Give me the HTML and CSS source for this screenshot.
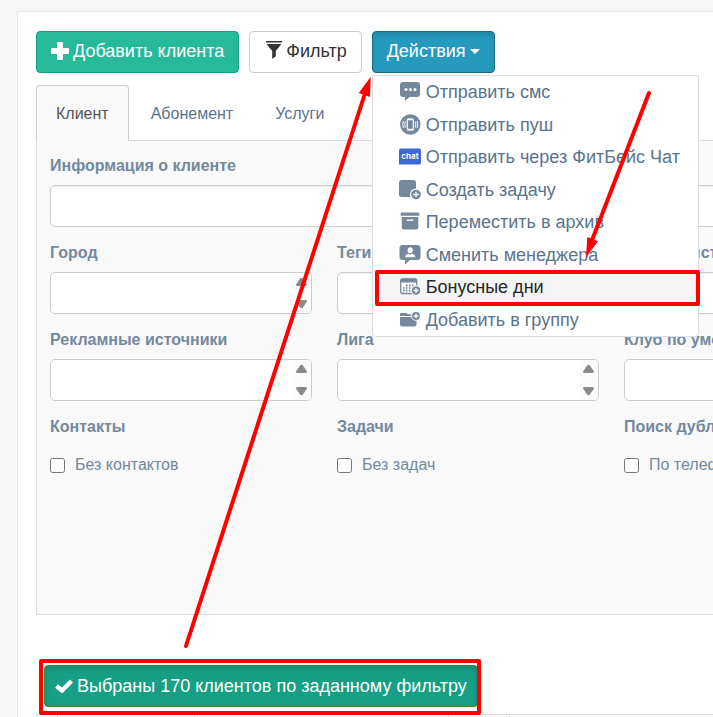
FILE: index.html
```html
<!DOCTYPE html>
<html lang="ru">
<head>
<meta charset="utf-8">
<title>Клиенты</title>
<link rel="stylesheet" href="styles.css">
</head>
<body>
<main class="panel">
  <div class="toolbar">
    <button type="button" class="btn btn-add">
      <svg class="icon-plus" viewBox="0 0 18 18" aria-hidden="true"><path d="M7 0h4q1 0 1 1v5h5q1 0 1 1v4q0 1-1 1h-5v5q0 1-1 1H7q-1 0-1-1v-5H1q-1 0-1-1V7q0-1 1-1h5V1q0-1 1-1z"/></svg>Добавить клиента
    </button>
    <button type="button" class="btn btn-filter">
      <svg class="icon-filter" viewBox="0 0 16 18" aria-hidden="true"><path d="M0 0h16v1.600H0zM.6 3h14.800L9.800 10v5.200L6.200 18v-8z"/></svg>Фильтр
    </button>
    <div class="dropdown">
      <button type="button" class="btn btn-actions" aria-expanded="true">Действия<span class="caret"></span></button>
      <ul class="menu">
        <li><a href="#sms"><svg viewBox="0 0 24 22"><path d="M4 1h14q3 0 3 3v9q0 3-3 3h-7.500l-4.500 4v-4H4q-3 0-3-3V4q0-3 3-3z"/><g fill="#fff"><circle cx="7" cy="8.500" r="1.500"/><circle cx="11.500" cy="8.500" r="1.500"/><circle cx="16" cy="8.500" r="1.500"/></g></svg>Отправить смс</a></li>
        <li><a href="#push"><svg viewBox="0 0 24 22"><circle cx="11.300" cy="10.500" r="10.200"/><g fill="none" stroke="#fff"><rect x="8.300" y="5" width="6" height="11" rx="1" stroke-width="1.200"/><path d="M8.500 5.500h5.600M8.500 15.500h5.600" stroke-width="1.600"/><path d="M6.300 7.500q-1.200 3 0 6M16.300 7.500q1.200 3 0 6M4.500 7q-1.600 3.500 0 7M18.100 7q1.600 3.500 0 7"/></g></svg>Отправить пуш</a></li>
        <li><a href="#chat"><svg viewBox="0 0 24 22"><path fill="#3e67d6" d="M2 2.500h18q2 0 2 2v12q0 2-2 2H0v-14q0-2 2-2z"/><text class="chat-text" x="11" y="13" text-anchor="middle">chat</text></svg>Отправить через ФитБейс Чат</a></li>
        <li><a href="#task"><svg viewBox="0 0 24 22"><rect x="0" y="1" width="17" height="17" rx="2.500"/><circle cx="17" cy="15.500" r="6" fill="#fff"/><circle cx="17" cy="15.500" r="4.800"/><path d="M17 12.700v5.600M14.200 15.500h5.600" stroke="#fff" stroke-width="1.300"/></svg>Создать задачу</a></li>
        <li><a href="#archive"><svg viewBox="0 0 24 22"><path d="M2.500 1.500h17q.8 0 .8.800v2.400H1.700V2.300q0-.8.800-.8zM2.800 6h16.500v10.500q0 2-2 2H4.800q-2 0-2-2z"/><path d="M7.700 9.200h6.600" stroke="#fff" stroke-width="1.400"/></svg>Переместить в архив</a></li>
        <li><a href="#manager"><svg viewBox="0 0 24 22"><path d="M4 1h14q3.500 0 3.500 3v9q0 3-3.500 3h-7l-5 4.500V16H4q-3.500 0-3.500-3V4Q.5 1 4 1z"/><g fill="#fff"><ellipse cx="11.200" cy="6.300" rx="2.600" ry="3"/><path d="M6 13.200q0-3 3.800-3.400l1.400 1 1.400-1q3.800.4 3.800 3.400z"/></g></svg>Сменить менеджера</a></li>
        <li><a href="#bonus" class="active"><svg viewBox="0 0 24 22"><rect x="1.700" y="3" width="16" height="14.500" rx="2" fill="#fff" stroke="#74889e" stroke-width="1.300"/><path d="M1.500 6.500V5q0-2.500 2.500-2.500h11.500q2.500 0 2.500 2.500v1.500z"/><path d="M7 9.300h9M4 12h12M4 14.700h8" fill="none" stroke="#74889e" stroke-width="1.700" stroke-dasharray="1.700 1.200"/><circle cx="17" cy="14.500" r="5.200" fill="#fff"/><circle cx="17" cy="14.500" r="4.300"/><path d="M17 12v5M14.500 14.500h5" stroke="#fff" stroke-width="1.300"/></svg>Бонусные дни</a></li>
        <li><a href="#group"><svg viewBox="0 0 24 22"><path d="M1 6V5q0-1 1-1h5l2 1.300h4V7H1zM1 8h16.500v7.500q0 2-2 2H3q-2 0-2-2z"/><circle cx="17" cy="7" r="4.800" fill="#fff"/><circle cx="17" cy="7" r="3.900"/><path d="M17 4.700v4.600M14.700 7h4.600" stroke="#fff" stroke-width="1.300"/></svg>Добавить в группу</a></li>
      </ul>
    </div>
  </div>

  <nav class="tabs">
    <a href="#client" class="tab current">Клиент</a>
    <a href="#pass" class="tab">Абонемент</a>
    <a href="#services" class="tab">Услуги</a>
  </nav>

  <form class="filters">
    <div class="field wide"><label for="info">Информация о клиенте</label><input id="info" type="text"></div>
    <div class="field"><label for="city">Город</label><div class="list"><select id="city" multiple></select><span class="scroll"></span></div></div>
    <div class="field"><label for="tags">Теги</label><input id="tags" type="text"></div>
    <div class="field"><label for="date">Дата регистрации</label><input id="date" type="text"></div>
    <div class="field"><label for="source">Рекламные источники</label><div class="list"><select id="source" multiple></select><span class="scroll"></span></div></div>
    <div class="field"><label for="league">Лига</label><div class="list"><select id="league" multiple></select><span class="scroll"></span></div></div>
    <div class="field"><label for="club">Клуб по умолчанию</label><div class="list"><select id="club" multiple></select><span class="scroll"></span></div></div>
    <fieldset class="field"><legend>Контакты</legend><label class="check"><input type="checkbox">Без контактов</label></fieldset>
    <fieldset class="field"><legend>Задачи</legend><label class="check"><input type="checkbox">Без задач</label></fieldset>
    <fieldset class="field"><legend>Поиск дублей</legend><label class="check"><input type="checkbox">По телефону</label></fieldset>
  </form>

  <button type="button" class="btn btn-selected">
    <svg class="icon-check" viewBox="0 0 18 14" aria-hidden="true"><path d="M1.500 7l5.500 4.500L16.500 2" fill="none" stroke="#fff" stroke-width="4.400"/></svg>Выбраны 170 клиентов по заданному фильтру
  </button>

  <table class="clients">
    <colgroup><col class="c-check"><col class="c-name"><col class="c-contact"><col class="c-age"><col></colgroup>
    <tbody><tr><td></td><td></td><td></td><td></td><td></td></tr></tbody>
  </table>
</main>

<svg class="marks" width="713" height="717" viewBox="0 0 713 717" aria-hidden="true">
  <g fill="none" stroke="#f00" stroke-width="4" stroke-linejoin="round" stroke-linecap="round">
    <path d="M186 646L364.500 95M649 93L592.500 239"/>
    <rect x="377" y="272" width="321" height="32"/>
    <rect x="41" y="661" width="438" height="52"/>
  </g>
  <path fill="#f00" d="M370.700 76.700L358.700 93L370 97zM586 257.500L587.300 237L598 241.300z"/>
</svg>
</body>
</html>
```

FILE: styles.css
```css
* { box-sizing: border-box; }

body {
  margin: 0;
  overflow: hidden;
  background: #f7f7f7;
  color: #74889e;
  font: 16px/24px "Liberation Sans", Arial, sans-serif;
}

.panel {
  min-width: 902px;
  min-height: 100vh;
  margin: 11px 0 0 17px;
  padding: 19px 18px;
  background: #fff;
  border: 1px solid #e7eaec;
}

.toolbar { display: flex; gap: 10px; }

.btn {
  display: flex;
  align-items: center;
  width: fit-content;
  height: 42px;
  padding: 0 14px 2px;
  border: 1px solid;
  border-radius: 4px;
  color: #fff;
  font: 18px/24px "Liberation Sans", Arial, sans-serif;
  white-space: nowrap;
}
.btn svg { flex: none; fill: currentColor; }
.btn-add { background: #26b99a; border-color: #169f85; }
.btn-filter { background: #fff; border-color: #ccc; color: #333; }
.btn-actions { background: #269abc; border-color: #1b6d85; box-shadow: inset 0 3px 5px rgba(0, 0, 0, .13); }
.btn-selected {
  margin: 50px 0 7px 8px;
  padding: 0 10px;
  background: #169f85;
  border-color: #398439;
  box-shadow: inset 0 3px 5px rgba(0, 0, 0, .13);
}
.icon-plus { width: 18px; height: 18px; margin-right: 4px; }
.icon-filter { width: 16px; height: 18px; margin: 0 4px 2px 2px; }
.icon-check { width: 18px; height: 14px; margin-right: 4px; }
.caret {
  margin-left: 4px;
  border-top: 5px solid #fff;
  border-left: 5px solid transparent;
  border-right: 5px solid transparent;
}

.dropdown { position: relative; }
.menu {
  position: absolute;
  z-index: 1;
  top: 100%;
  left: 0;
  display: grid;
  grid-auto-rows: 1fr;
  min-width: 327px;
  min-height: 262px;
  margin: 2px 0 0;
  padding: 0;
  list-style: none;
  background: #fff;
  border: 1px solid #d9dee4;
  border-radius: 0 0 4px 4px;
}
.menu li { display: grid; }
.menu a {
  display: flex;
  align-items: center;
  gap: 3px;
  padding: 0 16px 0 26px;
  color: #5a738e;
  font-size: 18px;
  text-decoration: none;
  white-space: nowrap;
}
.menu svg { flex: none; width: 24px; height: 22px; fill: #74889e; }
.menu .active { background: #f5f5f5; color: #262626; }
.menu .chat-text { fill: #fff; font: bold 8px Inter, sans-serif; }

.tabs { position: relative; display: flex; gap: 2px; margin-top: 12px; }
.tab {
  height: 56px;
  padding: 16px 19px;
  border: 1px solid transparent;
  border-bottom: 0;
  border-radius: 4px 4px 0 0;
  color: #5a738e;
  text-decoration: none;
}
.tab.current {
  background: #f9f9f9;
  border-color: #ccc;
  color: #555;
}

.filters {
  display: grid;
  grid-template-columns: repeat(3, minmax(262px, 1fr));
  gap: 14px 25px;
  margin-top: -1px;
  padding: 13px 13px 137px;
  background: #f9f9f9;
  border: 1px solid #ddd;
}
.field { min-width: 0; margin: 0; padding: 0; border: 0; }
.wide { grid-column: 1 / -1; }
.field label, .field legend {
  display: block;
  margin-bottom: 7px;
  padding: 0;
  font-weight: bold;
}
.field input[type="text"], .list select {
  display: block;
  width: 100%;
  height: 42px;
  padding: 0 8px;
  background: #fff;
  border: 1px solid #ccc;
  border-radius: 5px;
  outline: 0;
  font: inherit;
  color: #555;
}
.field input[type="text"] { box-shadow: inset 0 1px 1px rgba(0, 0, 0, .075); }
.list { position: relative; }
.list select { appearance: none; overflow: hidden; }
.scroll {
  position: absolute;
  inset: 1px 1px 1px auto;
  display: flex;
  flex-direction: column;
  justify-content: space-between;
  width: 19px;
  padding: 5px 4px;
  background: #fcfcfc;
  border-radius: 0 4px 4px 0;
}
.scroll::before, .scroll::after {
  content: "";
  width: 11px;
  height: 8px;
  background: #8a8a8a;
}
.scroll::before { clip-path: polygon(40% 0, 60% 0, 100% 80%, 94% 100%, 6% 100%, 0 80%); }
.scroll::after { clip-path: polygon(6% 0, 94% 0, 100% 20%, 60% 100%, 40% 100%, 0 20%); }

.field .check {
  display: flex;
  align-items: center;
  gap: 10px;
  margin: 7px 0 0;
  font-weight: normal;
}
.check input { width: 15px; height: 15px; margin: 0; }

.clients {
  width: 100%;
  border-collapse: collapse;
  table-layout: fixed;
}
.clients td { height: 48px; padding: 0; border: 1px solid #ddd; }
.c-check { width: 21px; }
.c-name { width: 137px; }
.c-contact { width: 254px; }
.c-age { width: 61px; }

.marks { position: absolute; z-index: 2; top: 0; left: 0; pointer-events: none; }
```
